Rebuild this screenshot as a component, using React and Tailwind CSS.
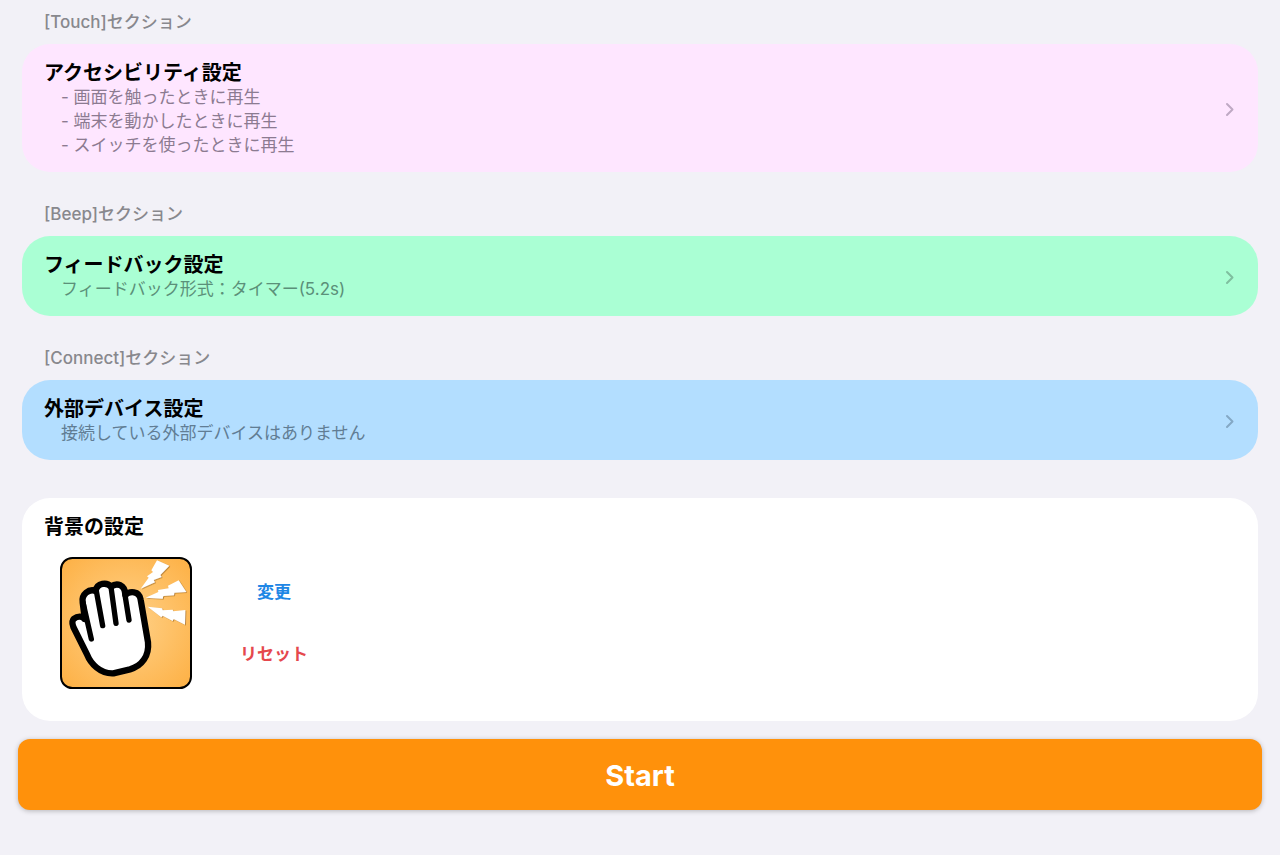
import { useState } from "react";

const sections = [
  {
    id: "touch",
    label: "[Touch]セクション",
    title: "アクセシビリティ設定",
    lines: [
      "- 画面を触ったときに再生",
      "- 端末を動かしたときに再生",
      "- スイッチを使ったときに再生",
    ],
    color: "bg-[#fee6ff]",
    textColor: "text-[#8c7b91]",
    arrowColor: "text-[#bfa9c4]",
  },
  {
    id: "beep",
    label: "[Beep]セクション",
    title: "フィードバック設定",
    lines: ["フィードバック形式：タイマー(5.2s)"],
    color: "bg-[#aaffd4]",
    textColor: "text-[#5b9079]",
    arrowColor: "text-[#7fbf9f]",
  },
  {
    id: "connect",
    label: "[Connect]セクション",
    title: "外部デバイス設定",
    lines: ["接続している外部デバイスはありません"],
    color: "bg-[#b3deff]",
    textColor: "text-[#617d94]",
    arrowColor: "text-[#84a8c5]",
  },
];

function Chevron({ className }) {
  return (
    <svg
      className={`h-4 w-3 shrink-0 ${className}`}
      viewBox="0 0 12 16"
      fill="none"
      stroke="currentColor"
      strokeWidth={2}
      strokeLinecap="round"
      strokeLinejoin="round"
      aria-hidden="true"
    >
      <path d="M3 3L8.5 8.5L3 14" />
    </svg>
  );
}

function HandPicture() {
  return (
    <svg
      className="size-33 shrink-0"
      viewBox="30 30 396 396"
      role="img"
      aria-label="背景"
    >
      <defs>
        <radialGradient id="glow" cx="0.5" cy="0.5" r="0.7">
          <stop offset="0" stopColor="#ffd28a" />
          <stop offset="1" stopColor="#fdb044" />
        </radialGradient>
        <filter id="boltShadow" x="-20%" y="-20%" width="140%" height="140%">
          <feDropShadow dx="3" dy="2" stdDeviation="2" floodColor="#8a5a14" floodOpacity="0.6" />
        </filter>
      </defs>
      <rect x="33" y="33" width="390" height="390" rx="34" fill="url(#glow)" stroke="#000" strokeWidth="6" />

      {/* Lightning bolts */}
      <g fill="#fff" filter="url(#boltShadow)">
        <path d="M321 40L358 56L331 84L335 90L311 99L315 106L272 125L296 92L291 88L309 75L304 70Z" />
        <path d="M386 100L409 135L373 137L372 145L340 147L338 155L287 152L325 135L324 129L356 124L354 116Z" />
        <path d="M293 179L336 184L338 190L368 188L370 193L406 189L405 233L371 216L368 222L338 206L334 211Z" />
      </g>

      {/* Hand */}
      <path
        d="M103 216C98 207 82 207 72 215C64 222 67 232 70 240L111 322C122 350 151 381 190 379L240 367C276 357 298 326 294 286L272 158C268 130 238 132 226 144C225 112 200 106 183 119C171 105 141 107 137 132C117 124 94 142 98 166L103 204Z"
        fill="#fff"
        stroke="#000"
        strokeWidth="19"
        strokeLinejoin="round"
      />
      <path
        d="M99 166L124 276M139 132L158 236M183 120L198 229M225 144L237 219"
        fill="none"
        stroke="#000"
        strokeWidth="16"
        strokeLinecap="round"
      />
    </svg>
  );
}

function SettingSection({ section }) {
  return (
    <section className="px-1">
      <h2 className="mb-[10px] px-[22px] text-[17px] leading-6 font-medium text-[#88888d]">
        {section.label}
      </h2>
      <button
        type="button"
        className={`flex w-full items-center justify-between rounded-[28px] px-[22px] pt-[17px] pb-[15px] text-left ${section.color}`}
      >
        <span className="block">
          <span className="block text-xl leading-6 font-semibold text-black">
            {section.title}
          </span>
          {section.lines.map((line) => (
            <span
              key={line}
              className={`block pl-[17px] text-[17px] leading-6 ${section.textColor}`}
            >
              {line}
            </span>
          ))}
        </span>
        <Chevron className={section.arrowColor} />
      </button>
    </section>
  );
}

export default function App() {
  const [hasPicture, setHasPicture] = useState(true);

  return (
    <main
      lang="ja"
      className="min-h-screen bg-[#f2f1f7] px-[18px] pt-[10px] pb-11 font-['Inter','Noto_Sans_CJK_JP',sans-serif]"
    >
      <div className="flex flex-col gap-[30px]">
        {sections.map((section) => (
          <SettingSection key={section.id} section={section} />
        ))}
      </div>

      {/* Background picture */}
      <section className="mx-1 mt-[38px] rounded-[28px] bg-white px-[22px] pt-[17px] pb-8">
        <h2 className="text-xl leading-6 font-semibold text-black">背景の設定</h2>
        <div className="mt-[18px] flex items-center gap-12 pl-4">
          {hasPicture ? <HandPicture /> : <div className="size-33 rounded-xl border-2 border-black" />}
          <div className="flex flex-col items-center gap-[38px] text-[17px] leading-6 font-semibold">
            <button type="button" className="text-[#1f87e5]" onClick={() => setHasPicture(true)}>
              変更
            </button>
            <button type="button" className="text-[#e5484d]" onClick={() => setHasPicture(false)}>
              リセット
            </button>
          </div>
        </div>
      </section>

      <button
        type="button"
        className="mt-[18px] block w-full rounded-xl bg-[#ff910b] pt-[19px] pb-[17px] text-center text-[29px] leading-[35px] font-bold text-white shadow-[0_1px_5px_rgba(0,0,0,0.25)]"
      >
        Start
      </button>
    </main>
  );
}
